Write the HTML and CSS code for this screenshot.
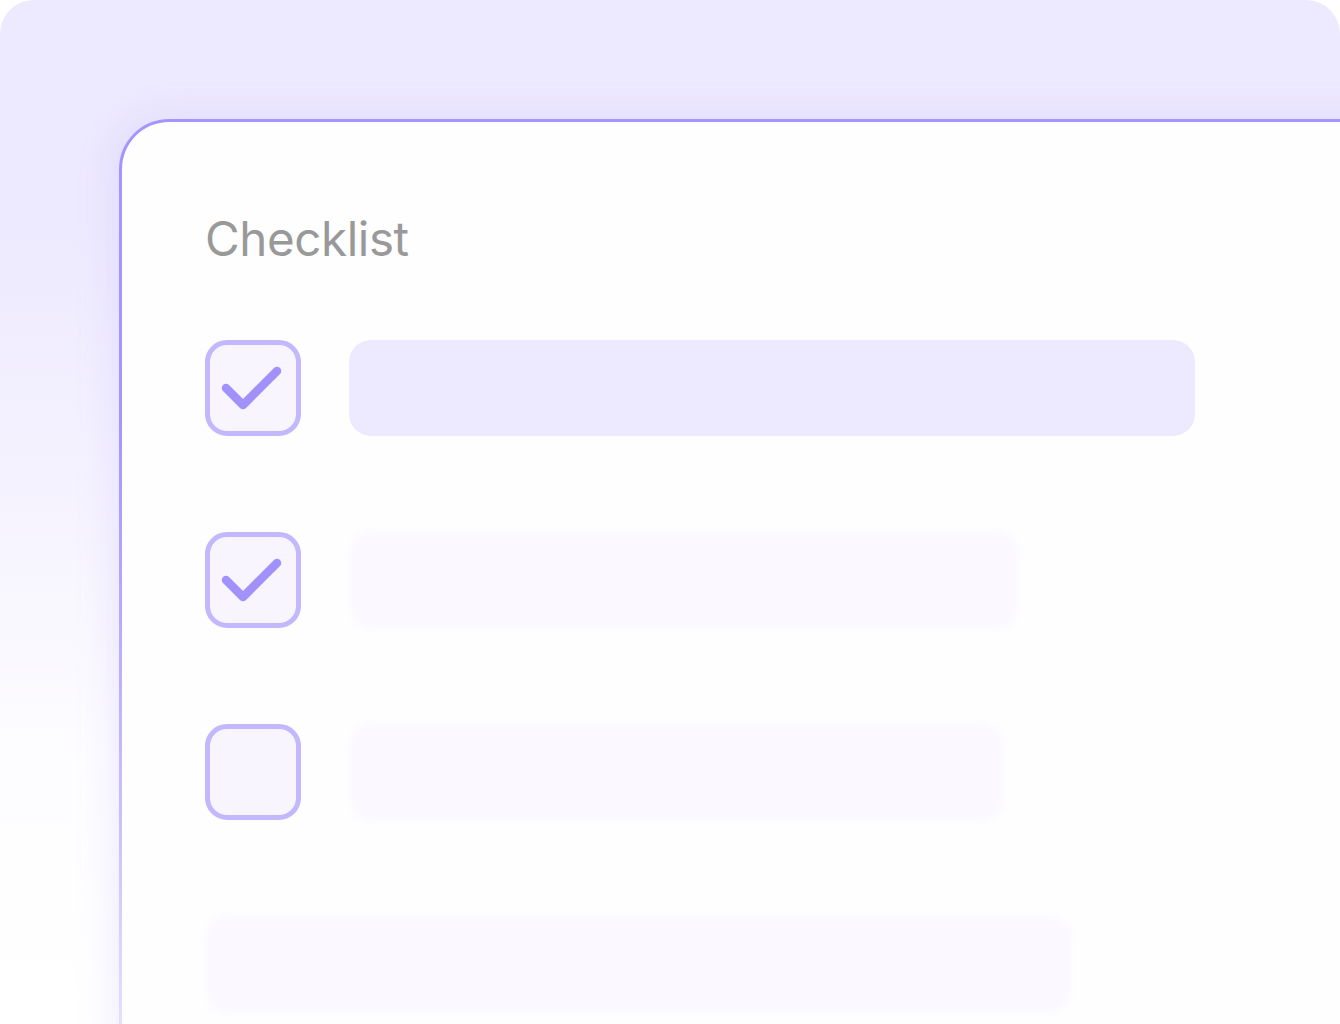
FILE: index.html
```html
<!DOCTYPE html>
<html lang="en">
<head>
<meta charset="utf-8">
<title>Checklist</title>
<link rel="stylesheet" href="styles.css">
</head>
<body>
<div class="frame">
  <div class="card">
    <h1 class="title">Checklist</h1>
    <div class="list">
      <div class="row">
        <div class="box">
          <svg viewBox="0 0 96 96" width="96" height="96" class="check"><path d="M21 48 L38 65 L72 31" fill="none" stroke="#a192fb" stroke-width="8.5" stroke-linecap="round" stroke-linejoin="round"/></svg>
        </div>
        <div class="bar bar-strong bar-w1"></div>
      </div>
      <div class="row">
        <div class="box">
          <svg viewBox="0 0 96 96" width="96" height="96" class="check"><path d="M21 48 L38 65 L72 31" fill="none" stroke="#a192fb" stroke-width="8.5" stroke-linecap="round" stroke-linejoin="round"/></svg>
        </div>
        <div class="bar bar-faint bar-w2"></div>
      </div>
      <div class="row">
        <div class="box"></div>
        <div class="bar bar-faint bar-w3"></div>
      </div>
      <div class="row">
        <div class="bar bar-faint bar-w4"></div>
      </div>
    </div>
  </div>
</div>
</body>
</html>
```

FILE: styles.css
```css
html, body {
  margin: 0;
  padding: 0;
  background: #ffffff;
}
body {
  width: 1340px;
  height: 1024px;
  overflow: hidden;
  font-family: Inter, "Liberation Sans", sans-serif;
}
.frame {
  box-sizing: border-box;
  width: 1340px;
  height: 1024px;
  border-radius: 34px 34px 0 0;
  background: linear-gradient(to bottom, #ede9fe 0px, #ede9fe 220px, #f4f1ff 450px, #fdfcff 750px, #ffffff 1024px);
  padding: 119px 0 0 119px;
  overflow: hidden;
}
.card {
  box-sizing: border-box;
  width: 1400px;
  height: 1000px;
  border: 3px solid transparent;
  border-right: none;
  border-bottom: none;
  border-radius: 50px 0 0 0;
  background:
    linear-gradient(#fefeff, #fefeff) padding-box,
    linear-gradient(to bottom, #a594fd 0px, #a594fd 300px, #c9c0fe 700px, #e4e0ff 905px) border-box;
  box-shadow: -4px 0 36px rgba(180, 165, 250, 0.22);
  padding: 93px 0 0 83px;
}
.title {
  margin: 0;
  font-size: 47.5px;
  line-height: 48px;
  font-weight: 400;
  color: #9a9999;
  letter-spacing: -0.4px;
}
.list {
  margin-top: 77px;
  display: flex;
  flex-direction: column;
  gap: 96px;
}
.row {
  display: flex;
  align-items: center;
  gap: 48px;
  height: 96px;
}
.box {
  box-sizing: border-box;
  width: 96px;
  height: 96px;
  flex: none;
  border: 5px solid #c3b8fd;
  border-radius: 22px;
  background: #f8f5ff;
  position: relative;
}
.check {
  position: absolute;
  left: -5px;
  top: -5px;
}
.bar {
  height: 96px;
  border-radius: 22px;
  flex: none;
}
.bar-strong {
  background: #ede9fe;
}
.bar-faint {
  background: #fbf9ff;
  filter: blur(3px);
}
.bar-w1 { width: 846px; }
.bar-w2 { width: 670px; height: 98px; }
.bar-w3 { width: 655px; height: 98px; }
.bar-w4 { width: 867px; height: 98px; }
```
